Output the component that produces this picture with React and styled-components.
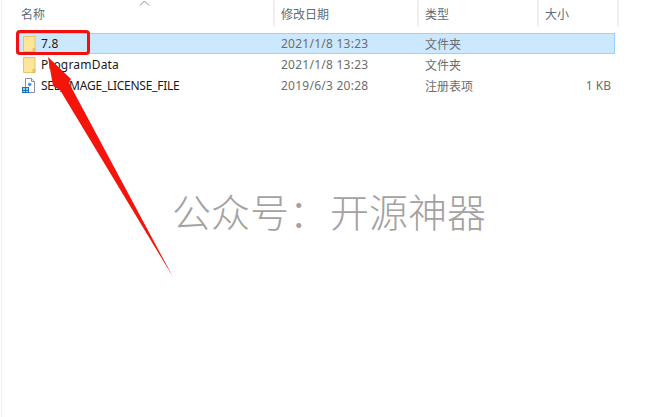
import React from 'react';
import styled, { createGlobalStyle } from 'styled-components';

const GlobalStyle = createGlobalStyle`
    html, body {
        margin: 0;
        padding: 0;
        background: #fff;
    }
    body {
        font-family: "Noto Sans", "Noto Sans CJK SC", sans-serif;
    }
`;

const Page = styled.div`
    position: relative;
    width: 656px;
    height: 417px;
    overflow: hidden;
    box-sizing: border-box;
    padding-left: 2px;
    background: #fff;
`;

const LeftEdge = styled.div`
    position: absolute;
    left: 1px;
    top: 0;
    bottom: 0;
    width: 1px;
    background: #f0f0f0;
`;

const Header = styled.div`
    display: grid;
    grid-template-columns: 257px 144px 120px 80px;
    height: 27px;
    margin-left: 16px;
    width: 601px;
`;

const HeaderCell = styled.div`
    box-sizing: border-box;
    height: 27px;
    padding-left: ${props => props.$pad}px;
    border-right: 2px solid #efefef;
    font-size: 12px;
    line-height: 27px;
    color: #5f6b78;
    font-family: "Noto Sans CJK SC", sans-serif;
`;

const SortCaret = styled.svg`
    position: absolute;
    left: 139px;
    top: 0;
    width: 11px;
    height: 6px;
`;

const List = styled.div`
    margin-top: 6px;
    margin-left: 14px;
    width: 599px;
`;

const Row = styled.div`
    display: grid;
    grid-template-columns: 258px 144px 120px 75px;
    box-sizing: border-box;
    height: 21px;
    align-items: center;
    border: 1px solid ${props => (props.$selected ? '#99d1ff' : 'transparent')};
    background: ${props => (props.$selected ? '#cce8ff' : 'transparent')};
`;

const NameCell = styled.div`
    display: flex;
    align-items: center;
    gap: 3px;
    padding-left: 5px;
    font-size: 12px;
    letter-spacing: ${props => props.$tracking}px;
    color: #1a1a1a;
    white-space: nowrap;
`;

const DateCell = styled.div`
    padding-left: 6px;
    font-size: 12px;
    letter-spacing: 0.25px;
    color: #6d6d6d;
    white-space: nowrap;
`;

const TypeCell = styled(DateCell)`
    padding-left: 6px;
    letter-spacing: 0;
    font-family: "Noto Sans CJK SC", sans-serif;
`;

const SizeCell = styled.div`
    text-align: right;
    padding-right: 3px;
    font-size: 12px;
    color: #6d6d6d;
`;

const Watermark = styled.div`
    position: absolute;
    left: 172px;
    top: 186px;
    font-family: "Noto Sans CJK SC", sans-serif;
    font-weight: 300;
    font-size: 39px;
    line-height: 48px;
    color: #a5a1a1;
    white-space: nowrap;
`;

const WatermarkName = styled.span`
    margin-left: 2px;
`;

const Highlight = styled.div`
    position: absolute;
    left: 16px;
    top: 30px;
    width: 74px;
    height: 25px;
    box-sizing: border-box;
    border: 3px solid #f01010;
    border-radius: 4px;
`;

const Arrow = styled.svg`
    position: absolute;
    left: 0;
    top: 0;
    width: 656px;
    height: 417px;
    pointer-events: none;
`;

const FolderIcon = () => (
    <svg width="16" height="16" viewBox="0 0 16 16">
        <path d="M1.500 .5h11.500v15h-11.500z" fill="#fde59b" stroke="#e6c566" />
        <path d="M11 15.500v-3h2v3z" fill="#f3d27a" stroke="#e0bd5c" />
    </svg>
);

const FileIcon = () => (
    <svg width="16" height="16" viewBox="0 0 16 16">
        <path d="M3.500 .5h6l3 3v11h-9z" fill="#fff" stroke="#8a9099" />
        <path d="M9.500 .5v3h3" fill="#e8edf2" stroke="#8a9099" />
        <path d="M7 4.500l3 1.500-2 2.500-2.500-1.500z" fill="#4a90d9" />
        <path d="M0 9h7v6h-7z" fill="#1f6fc4" />
        <path d="M1 10h2v2h-2zM4 10h2v2h-2zM1 13h2v1h-2zM4 13h2v1h-2z" fill="#9fd0f5" />
    </svg>
);

const files = [
    { name: '7.8', date: '2021/1/8 13:23', type: '文件夹', size: '', selected: true, tracking: 0.2, icon: <FolderIcon /> },
    { name: 'ProgramData', date: '2021/1/8 13:23', type: '文件夹', size: '', tracking: 0.2, icon: <FolderIcon /> },
    { name: 'SEE_IMAGE_LICENSE_FILE', date: '2019/6/3 20:28', type: '注册表项', size: '1 KB', tracking: -0.25, icon: <FileIcon /> },
];

export default function App() {
    return (
        <Page>
            <GlobalStyle />
            <LeftEdge />
            <SortCaret viewBox="0 0 11 6">
                <path d="M1 5.500l4.500-4.500 4.500 4.500" fill="none" stroke="#8a8a8a" />
            </SortCaret>
            <Header>
                <HeaderCell $pad={3}>名称</HeaderCell>
                <HeaderCell $pad={6}>修改日期</HeaderCell>
                <HeaderCell $pad={6}>类型</HeaderCell>
                <HeaderCell $pad={6}>大小</HeaderCell>
            </Header>
            <List>
                {files.map(file => (
                    <Row key={file.name} $selected={file.selected}>
                        <NameCell $tracking={file.tracking}>
                            {file.icon}
                            {file.name}
                        </NameCell>
                        <DateCell>{file.date}</DateCell>
                        <TypeCell>{file.type}</TypeCell>
                        <SizeCell>{file.size}</SizeCell>
                    </Row>
                ))}
            </List>
            <Watermark>公众号：<WatermarkName>开源神器</WatermarkName></Watermark>
            <Highlight />
            <Arrow viewBox="0 0 656 417">
                <path d="M48 57L71 79L69 83L173 277L60 90L53 86Z" fill="#f5140c" />
            </Arrow>
        </Page>
    );
}
